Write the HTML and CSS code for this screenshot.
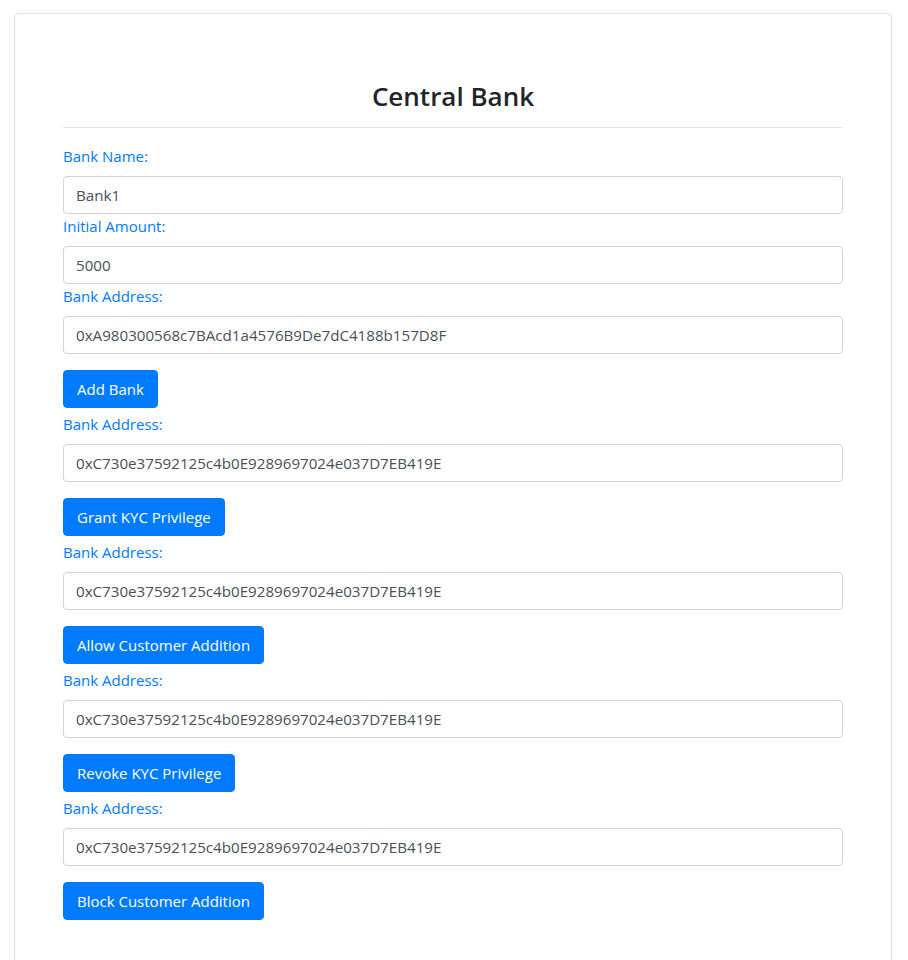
FILE: index.html
```html
<!DOCTYPE html>
<html lang="en">
<head>
<meta charset="utf-8">
<title>Central Bank</title>
<link rel="stylesheet" href="styles.css">
</head>
<body>
<div class="card">
  <h2 class="title">Central Bank</h2>
  <hr class="rule">
  <label class="lbl">Bank Name:</label>
  <input class="field" type="text" value="Bank1">
  <label class="lbl">Initial Amount:</label>
  <input class="field" type="text" value="5000">
  <label class="lbl">Bank Address:</label>
  <input class="field" type="text" value="0xA980300568c7BAcd1a4576B9De7dC4188b157D8F">
  <div class="actions"><button class="btn">Add Bank</button></div>

  <label class="lbl">Bank Address:</label>
  <input class="field" type="text" value="0xC730e37592125c4b0E9289697024e037D7EB419E">
  <div class="actions"><button class="btn">Grant KYC Privilege</button></div>

  <label class="lbl">Bank Address:</label>
  <input class="field" type="text" value="0xC730e37592125c4b0E9289697024e037D7EB419E">
  <div class="actions"><button class="btn">Allow Customer Addition</button></div>

  <label class="lbl">Bank Address:</label>
  <input class="field" type="text" value="0xC730e37592125c4b0E9289697024e037D7EB419E">
  <div class="actions"><button class="btn">Revoke KYC Privilege</button></div>

  <label class="lbl">Bank Address:</label>
  <input class="field" type="text" value="0xC730e37592125c4b0E9289697024e037D7EB419E">
  <div class="actions"><button class="btn">Block Customer Addition</button></div>
</div>
</body>
</html>
```
FILE: styles.css
```css
* { box-sizing: border-box; }
html, body { margin: 0; padding: 0; background: #fff; }
body {
  font-family: "Open Sans", "Noto Sans", "Liberation Sans", sans-serif;
  font-size: 16px;
  line-height: 24px;
  color: #212529;
}
.card {
  margin: 13px 16px 0 14px;
  border: 1px solid rgba(0,0,0,.125);
  border-radius: 4px;
  padding: 64px 48px 40px 48px;
  min-height: 960px;
}
.title {
  margin: 0;
  text-align: center;
  font-size: 26px;
  line-height: 36px;
  font-weight: 600;
  color: #212529;
}
.rule {
  margin: 13px 0 16px 0;
  border: 0;
  border-top: 1px solid rgba(0,0,0,.1);
  height: 0;
}
.lbl {
  display: block;
  color: #007bff;
  margin-bottom: 8px;
  font-size: 15px;
}
.field {
  display: block;
  width: 100%;
  height: 38px;
  padding: 6px 12px;
  font-family: inherit;
  font-size: 15.15px;
  line-height: 24px;
  color: #495057;
  background: #fff;
  border: 1px solid #ced4da;
  border-radius: 4px;
}
.actions {
  margin-top: 16px;
  padding-bottom: 4px;
  line-height: 0;
}
.btn {
  display: inline-block;
  height: 38px;
  padding: 6px 13px;
  font-family: inherit;
  font-size: 15px;
  line-height: 24px;
  color: #fff;
  background: #007bff;
  border: 1px solid #007bff;
  border-radius: 4px;
}
```
